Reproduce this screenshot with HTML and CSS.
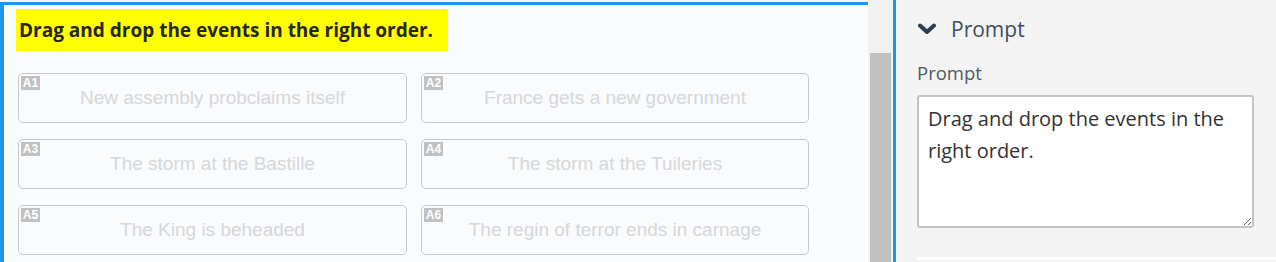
FILE: index.html
```html
<!DOCTYPE html>
<html lang="en">
<head>
    <meta charset="UTF-8">
    <meta name="viewport" content="width=device-width, initial-scale=1.0">
    <title>Ordering question editor</title>
    <link rel="stylesheet" href="styles.css">
</head>
<body>
    <div class="editor">
        <div class="question">
            <h2 class="prompt-text">Drag and drop the events in the right order.</h2>
        </div>

        <div class="answers">
            <div class="answer">
                <span class="answer-tag">A1</span>
                New assembly probclaims itself
            </div>
            <div class="answer">
                <span class="answer-tag">A2</span>
                France gets a new government
            </div>
            <div class="answer">
                <span class="answer-tag">A3</span>
                The storm at the Bastille
            </div>
            <div class="answer">
                <span class="answer-tag">A4</span>
                The storm at the Tuileries
            </div>
            <div class="answer">
                <span class="answer-tag">A5</span>
                The King is beheaded
            </div>
            <div class="answer">
                <span class="answer-tag">A6</span>
                The regin of terror ends in carnage
            </div>
        </div>
    </div>

    <div class="scroll-track">
        <div class="scroll-thumb"></div>
    </div>

    <div class="sidebar">
        <div class="section-header">
            <svg class="chevron" width="20" height="12" viewBox="0 0 20 12">
                <polyline points="3,2.5 10,9 17,2.5" fill="none" stroke="#2c3e50" stroke-width="4" stroke-linecap="round" stroke-linejoin="round"/>
            </svg>
            <span>Prompt</span>
        </div>

        <label class="field-label" for="prompt-input">Prompt</label>
        <textarea id="prompt-input" class="field-input">Drag and drop the events in the right order.</textarea>

        <div class="next-section"></div>
    </div>
</body>
</html>
```

FILE: styles.css
```css
body {
    margin: 0;
    padding: 0;
    display: flex;
    height: 262px;
    overflow: hidden;
    font-family: "Open Sans", sans-serif;
    background-color: #f4f4f4;
}
.editor {
    width: 868px;
    flex-shrink: 0;
    margin-top: 2px;
    border-left: 4px solid #1b95ee;
    border-top: 3px solid #1b95ee;
    background-color: #fafbfc;
    padding: 4px 0 0 12px;
    box-sizing: border-box;
}
.question {
    display: flex;
}
.prompt-text {
    margin: 0;
    padding: 0 15px 0 3px;
    background-color: #ffff00;
    color: #262626;
    font-size: 19px;
    font-weight: 700;
    line-height: 42px;
}
.answers {
    display: grid;
    grid-template-columns: 389px 388px;
    column-gap: 14px;
    row-gap: 16px;
    margin: 22px 0 0 2px;
}
.answer {
    position: relative;
    height: 50px;
    border: 1px solid #c5c7c9;
    border-radius: 5px;
    box-sizing: border-box;
    display: flex;
    align-items: center;
    justify-content: center;
    padding-bottom: 1px;
    font-family: "Liberation Sans", Arial, sans-serif;
    font-size: 19px;
    color: #d5d7d9;
}
.answer-tag {
    position: absolute;
    left: 2px;
    top: 2px;
    width: 19px;
    height: 14px;
    background-color: #bfc1c3;
    color: #ffffff;
    font-size: 12px;
    font-weight: 700;
    line-height: 14px;
    text-align: center;
}
.scroll-track {
    width: 28px;
    flex-shrink: 0;
    background-color: #f1f1f1;
    padding: 53px 2px 0 2px;
    box-sizing: border-box;
    border-right: 3px solid #1b95ee;
}
.scroll-thumb {
    height: 100%;
    background-color: #c1c1c1;
}
.sidebar {
    flex: 1;
    padding: 14px 0 0 21px;
    display: flex;
    flex-direction: column;
    align-items: flex-start;
}
.section-header {
    display: flex;
    align-items: center;
    gap: 14px;
    color: #3e4e5e;
    font-size: 21px;
    height: 30px;
}
.chevron {
    display: block;
}
.field-label {
    margin-top: 17px;
    color: #505a64;
    font-size: 18.5px;
    line-height: 24px;
}
.field-input {
    margin-top: 10px;
    width: 337px;
    height: 133px;
    box-sizing: border-box;
    border: 2px solid #c0c5ca;
    border-radius: 3px;
    padding: 6px 9px;
    font-family: "Open Sans", sans-serif;
    font-size: 20px;
    line-height: 32px;
    color: #333333;
    background-color: #ffffff;
    resize: vertical;
}
.next-section {
    margin-top: 29px;
    align-self: stretch;
    height: 3px;
    background-color: #ffffff;
}
```
